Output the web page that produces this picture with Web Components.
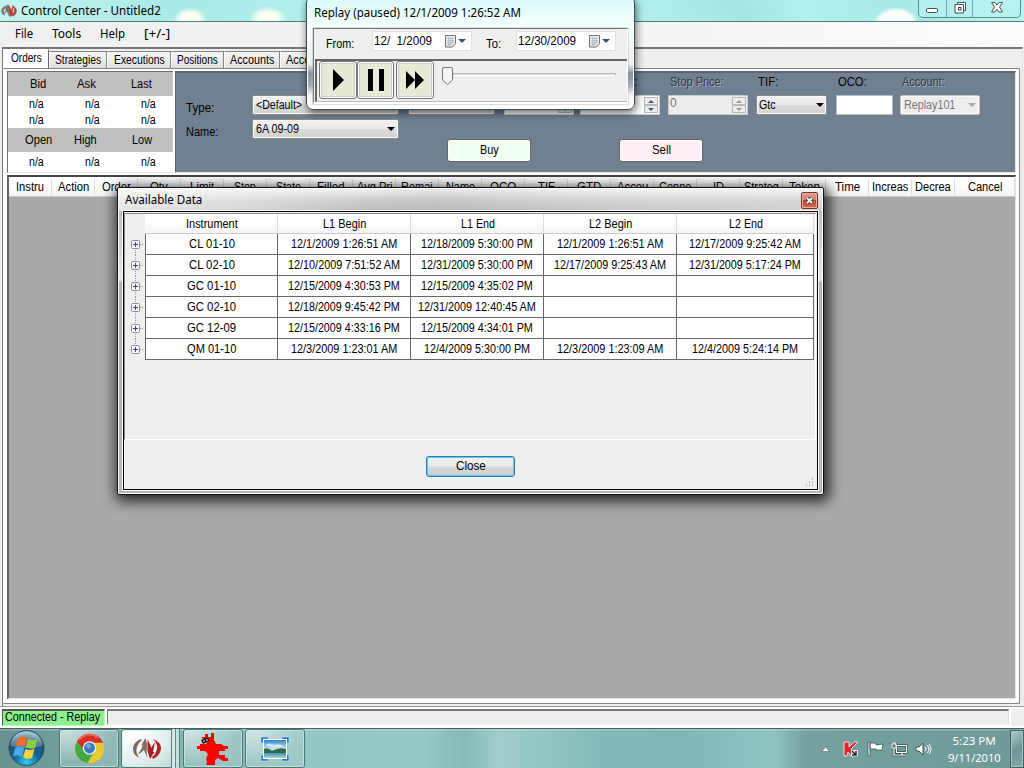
<!DOCTYPE html>
<html lang="en"><head><meta charset="utf-8"><title>Control Center - Untitled2</title>
<style>html,body{margin:0;width:1024px;height:768px;overflow:hidden}body{font:12px/13px "Liberation Sans",Arial,sans-serif;color:#000}</style></head>
<body><win-desktop></win-desktop>
<script>
const base = '*{box-sizing:border-box}:host{box-sizing:border-box}';
function define(name, css, html) {
  customElements.define(name, class extends HTMLElement {
    connectedCallback() {
      if (this.shadowRoot) return;
      const markup = typeof html === 'function' ? html(this) : html;
      this.attachShadow({mode: 'open'}).innerHTML = `<style>${base}${css}</style>${markup}`;
    }
  });
}
// A line of text condensed or expanded to a given width.
customElements.define('fit-text', class extends HTMLElement {
  connectedCallback() {
    if (this.shadowRoot) return;
    this.attachShadow({mode: 'open'}).innerHTML = '<style>:host{display:block;flex:none;white-space:nowrap}span{display:inline-block;transform-origin:0 50%;white-space:nowrap}</style><span><slot></slot></span>';
    const w = +this.getAttribute('w'), s = this.shadowRoot.querySelector('span');
    if (w) { const n = s.offsetWidth; this.style.width = w + 'px'; if (n) s.style.transform = `scaleX(${w / n})`; }
  }
});
const T = (t, w) => `<fit-text w="${w}">${t}</fit-text>`;

define('title-bar', `:host{display:flex;height:22px;border-bottom:1px solid #4f7f80;align-items:flex-start;
 background:radial-gradient(ellipse 17px 13px at 190px 20px,#fbfff0 55%,#fbfff000),radial-gradient(ellipse 19px 13px at 268px 19px,#fdfff2 50%,#fdfff200),radial-gradient(ellipse 22px 14px at 896px 21px,#fff 70%,#fff0),linear-gradient(60deg,#c4f3f0 0,#aaeae7 18%,#b4f2ee 35%,#b0eeeb 65%,#a5e6e3 72%,#b2f1ed 78%,#a8eae7 88%,#b9f5f2 100%)}
 svg.logo{margin:3px 4px 0 1px}.t{font:12px/16px "Noto Sans",sans-serif;margin-top:3px}
 .ctl{margin-left:auto;margin-right:3px;display:flex;width:103px;height:18px;border:1px solid #5b8d8d;border-top:0;border-radius:0 0 5px 5px;background:#b9f2ef99}
 .ctl i{display:flex;align-items:center;justify-content:center;border-right:1px solid #79aaaa;padding-bottom:2px}.ctl i:last-child{border:0}`,
 `<svg class="logo" width="16" height="16" viewBox="0 0 30 26"><path d="M8 3Q1 7 1 13Q1 19 7 21Q3 15 5 11Q6 7 9 5zM6 18Q10 12 10 8L7 9L13 1L17 9L14 8Q14 16 15 22Q13 17 11 13Q9 16 6 18z" fill="#77716e" stroke="#77716e"/><path d="M22 23Q29 19 29 13Q29 6 21 3Q26 8 25 14Q24 18 21 20zM15 3Q18 8 19 12Q20 9 23 5L21 18L24 17L17 24L15 14z" fill="#b53a3a" stroke="#b53a3a"/></svg>
 <div class="t">${T('Control Center - Untitled2',140)}</div>
 <div class="ctl"><i style="width:28px"><svg width="14" height="16"><rect x="1.5" y="8.5" width="11" height="4" rx="1" fill="#fff" stroke="#454f5c"/></svg></i><i style="width:27px"><svg width="14" height="14"><path d="M4.500 1.500h8v8h-2v2.500h-8.500v-8.500h2.500z" fill="#fff" stroke="#454f5c"/><rect x="5.500" y="6.500" width="2.500" height="2.500" fill="#cff" stroke="#454f5c"/><path d="M4.500 3.500h6v6" fill="none" stroke="#454f5c"/></svg></i><i style="width:47px"><svg width="14" height="13" viewBox="0 0 14 13"><path d="M1.500 1.500h3.500l2 2.500l2-2.500h3.500l-3 4.500l3 5h-3.500l-2-2.700l-2 2.700h-3.500l3-5z" fill="#fff" stroke="#454f5c"/></svg></i></div>`);

define('menu-bar', `:host{display:flex;height:25px;padding:4px 0 0 15px;background:linear-gradient(90deg,#f0f0f0,#f3f3f3 55%,#fcfcfc);font:12px/16px "Noto Sans",sans-serif;gap:19px}`,
 `${T('File',18)}${T('Tools',29)}${T('Help',25)}${T('[+/-]',26)}`);

define('tab-bar', `:host{display:flex;height:20px;background:#efefef;align-items:flex-end;margin-left:0}
 div{height:18px;background:linear-gradient(#f4f4f4,#ededed 45%,#dcdcdc);border:1px solid #858585;border-bottom:0;border-left-color:#fff;display:flex;justify-content:center;padding-top:2px;flex:none}
 .on{height:20px;background:#fff;padding-top:2px;border-color:#fff #666 #fff #fff}`,
 [['Orders',31,46],['Strategies',46,58],['Executions',51,64],['Positions',41,53],['Accounts',44,56],['Account Performance',105,116]].map((a,i)=>`<div class="${i?'':'on'}" style="width:${a[2]}px">${T(a[0],a[1])}</div>`).join(''));

define('quote-panel', `:host{display:block;width:166px;height:102px;border:1px solid #707070;border-right:0;border-bottom-color:#e5e5e5;background:#fff;flex:none}
 .r{display:grid;grid-template-columns:60px 37px 65px;justify-items:center;align-items:center;height:16px}.h{background:#c0c0c0;height:24px;border-right:1px solid #ccc}.o{height:24px}.r:not(.h){grid-template-columns:57px 54px 58px;padding-top:1px}`,
 (()=>{const n=`<div class="r">${T('n/a',15).repeat(3)}</div>`;
 return `<div class="r h">${T('Bid',16)}${T('Ask',19)}<span style="margin-left:8px">${T('Last',21)}</span></div>${n}${n}<div class="r h o">${T('Open',27)}<span style="margin-left:-3px">${T('High',23)}</span><span style="margin-left:8px">${T('Low',20)}</span></div><div class="r" style="height:20px">${T('n/a',15).repeat(3)}</div>`})());

define('combo-box', `:host{display:flex;height:20px;align-items:center;justify-content:space-between;padding:0 3px 0 3px;border:1px solid #8a8a8a;border-radius:2px;background:linear-gradient(#f3f3f3,#e9e9e9 49%,#dcdcdc 51%,#d0d0d0);box-shadow:inset 0 0 0 1px #fafafa}
 i{border:4px solid transparent;border-top-color:#000;border-bottom:0}:host([disabled]){background:#eee;color:#777;border-color:#c6c6c6}:host([disabled]) i{border-top-color:#aaa}`, '<slot></slot><i></i>');
define('spin-box', `:host{display:flex;height:20px;justify-content:space-between;background:#fff;border:1px solid #c5cbd0;padding:1px}
 b{font-weight:400}.s{display:flex;flex-direction:column;width:14px}.s i{height:8px;border:1px solid #b7b7b7;background:#eee;display:flex;align-items:center;justify-content:center}
 .s i:before{content:"";border:3px solid transparent;border-bottom-color:#3c559b;border-top:0}.s i:last-child:before{border:3px solid transparent;border-top-color:#3c559b;border-bottom:0}
 :host([disabled]){background:#ececec;color:#777}:host([disabled]) .s i:before{border-bottom-color:#999}:host([disabled]) .s i:last-child:before{border-top-color:#999}`,
 '<b><slot></slot></b><div class="s"><i></i><i></i></div>');
define('form-field', `:host{display:flex;flex-direction:column;gap:6px;flex:none}.l{height:13px;padding-left:2px}:host([dim]) .l{color:#303a43;text-shadow:1px 1px 0 #a9b2bb}`, '<div class="l"><slot name="label"></slot></div><slot></slot>');
define('push-button', `:host{display:flex;width:84px;height:23px;border:1px solid #666;border-radius:3px;align-items:center;justify-content:center;box-shadow:inset 0 0 0 1px #fff;padding-bottom:1px}`, '<slot></slot>');

define('order-form', `:host{display:flex;flex:1;height:102px;background:#708090;border:1px solid #5c6670;border-width:2px 1px 1px 1px;border-color:#5c6670 #e5e5e5 #e5e5e5 #5c6670}
 .a{width:76px;padding:29px 0 0 10px;display:flex;flex-direction:column;gap:11px;flex:none}.b{width:147px;padding-top:22px;display:flex;flex-direction:column;gap:4px;margin-right:9px;flex:none}
 .c{padding-top:3px}.f{display:flex}.g{display:flex;gap:88px;padding:24px 0 0 39px}`,
 `<div class="a">${T('Type:',28)}${T('Name:',32)}</div>
 <div class="b"><combo-box>${T('&lt;Default&gt;',46)}</combo-box><combo-box>${T('6A 09-09',43)}</combo-box></div>
 <div class="c"><div class="f">
 <form-field style="width:87px;margin-right:9px"><span slot="label">&nbsp;</span><combo-box>${T('Limit',24)}</combo-box></form-field>
 <form-field style="width:70px;margin-right:6px"><span slot="label">&nbsp;</span><spin-box>1</spin-box></form-field>
 <form-field style="width:80px;margin-right:8px"><span slot="label">${T('Limit Price:',55)}</span><spin-box>0</spin-box></form-field>
 <form-field dim style="width:80px;margin-right:8px"><span slot="label">${T('Stop Price:',54)}</span><spin-box disabled>0</spin-box></form-field>
 <form-field style="width:71px;margin-right:9px"><span slot="label">${T('TIF:',20)}</span><combo-box style="padding:0 2px">${T('Gtc',17)}</combo-box></form-field>
 <form-field style="width:57px;margin-right:7px"><span slot="label">${T('OCO:',29)}</span><div style="height:20px;background:#fff;border:1px solid #b8bec5"></div></form-field>
 <form-field dim style="width:80px"><span slot="label">${T('Account:',43)}</span><combo-box disabled style="padding:0 3px">${T('Replay101',51)}</combo-box></form-field>
 </div><div class="g"><push-button style="background:#f0fff0">${T('Buy',19)}</push-button><push-button style="background:#fff0f5">${T('Sell',19)}</push-button></div></div>`);

define('orders-grid', `:host{display:block;flex:1;background:#a9a9a9;border:2px solid #666;border-top-color:#454545;border-right:1px solid #e3e3e3;border-bottom:1px solid #e3e3e3}
 div{display:grid;grid-template-columns:repeat(22,43px) 1fr;height:20px;background:linear-gradient(#fff,#fff 45%,#f3f3f4);border-bottom:1px solid #ccc;align-items:center;justify-items:center;padding-top:2px}
 i{font-style:normal;border-right:1px solid #dedede;width:100%;height:17px;display:flex;justify-content:center;align-items:center}`,
 '<div>'+[['Instru',28],['Action',31],['Order',29],['Qty',18],['Limit',24],['Stop',22],['State',25],['Filled',28],['Avg Pri',35],['Remai',32],['Name',29],['OCO',26],['TIF',17],['GTD',24],['Accou',31],['Conne',32],['ID',11],['Strateg',35],['Token',31],['Time',25],['Increas',36],['Decrea',36],['Cancel',34]].map(a=>`<i>${T(...a)}</i>`).join('')+'</div>');

define('status-bar', `:host{display:flex;height:22px;background:#fff;border-top:1px solid #999;padding:2px 0 2px 2px;gap:2px}
 .c{width:103px;height:17px;background:#90ee90;border:1px solid #555;border-width:2px 1px 1px 1px;border-right-color:#afa;border-bottom-color:#afa;padding:0 2px}.e{flex:1;background:#f0eded;border:solid #777;border-width:2px 1px 1px 1px;border-right-color:#ddd;border-bottom-color:#eee;height:16px}.z{width:13px;background:#f0eded}`,
 `<div class="c">${T('Connected - Replay',95)}</div><div class="e"></div><div class="z"></div>`);

// Calendar drop-down used by the replay controller.
define('date-field', `:host{display:flex;align-items:center;width:100px;height:20px;background:#fff;border:1px solid #dce2e8;padding:0 5px 0 1px;justify-content:space-between}.i{display:flex;align-items:center;gap:2px}.i i{border:4px solid transparent;border-top-color:#38506e;border-bottom:0}`,
 `<slot></slot><div class="i"><svg width="11" height="13"><path d="M.5 .5h10v8l-3 3.500h-7z" fill="#e9edf2" stroke="#77706c"/><path d="M2 3.500h7M2 5.500h7M2 7.500h7M2 9.500h5M3.500 2v9M5.500 2v9M7.500 2v7" stroke="#a5b3c3" stroke-width=".7"/></svg><i></i></div>`);

define('replay-window', `:host{position:absolute;left:306px;top:-4px;width:329px;height:114px;border:1px solid #3d4c51;border-radius:7px;box-shadow:inset 0 0 0 1px #fff,1px 3px 8px #0009;background:linear-gradient(#d9fbf9 0,#effefd 20%,#f6ffff 28%,#f3f3f3 48%,#eee 60%,#8592a0 68%,#a6b0bb 79%,#f6f6f6 88%,#fff 100%);padding:8px 6px 0;display:block}
 .t{font:12px/16px "Noto Sans",sans-serif;height:23px;padding-left:1px}
 .body{height:76px;background:#efefef;border:1px solid #777;border-right-color:#fff;border-bottom:2px solid #fff;outline:1px solid #8884;width:315px}
 .d{display:flex;height:30px;padding:2px 0 0 12px}.d>fit-text{margin-top:7px}
 .p{display:flex;margin-left:1px;height:43px;border:2px solid #666;border-width:2px 0 0 2px;padding:0 0 0 2px;border-bottom:1px solid #bbb}
 .p b{width:38px;height:38px;background:#e9e9da;border:1px solid #777;border-radius:3px;box-shadow:inset 0 0 0 1px #fff,inset 0 0 0 2px #ccc;display:flex;align-items:center;justify-content:center;margin-top:0}
 .s{display:flex;margin:6px 0 0 8px}.s hr{width:163px;height:3px;margin:6px 0;border:1px solid #bbb;border-bottom-color:#fff;background:#ddd}`,
 `<div class="t">${T('Replay (paused) 12/1/2009 1:26:52 AM',207)}</div><div class="body"><div class="d">${T('From:',28)}<date-field style="margin:0 14px 0 18px;white-space:pre">${T('12/&nbsp; 1/2009',58)}</date-field>${T('To:',15)}<date-field style="margin-left:15px">${T('12/30/2009',58)}</date-field></div>
 <div class="p"><b><svg width="14" height="24"><path d="M2 1L13 12L2 23z"/></svg></b><b style="width:37px;margin-right:2px"><svg width="18" height="22"><path d="M1 0h5v22H1zM12 0h5v22h-5z"/></svg></b><b><svg width="20" height="18"><path d="M1 0L10 9L1 18zM10 0L19 9L10 18z"/></svg></b><div class="s"><svg width="11" height="18"><path d="M2 .5h7q1.500 0 1.500 1.500v11l-5 4.500l-5-4.500v-11q0-1.500 1.500-1.500z" fill="#f5f5f5" stroke="#777"/></svg><hr></div></div></div>`);

const rows = [
 ['CL 01-10','12/1/2009 1:26:51 AM','12/18/2009 5:30:00 PM','12/1/2009 1:26:51 AM','12/17/2009 9:25:42 AM'],
 ['CL 02-10','12/10/2009 7:51:52 AM','12/31/2009 5:30:00 PM','12/17/2009 9:25:43 AM','12/31/2009 5:17:24 PM'],
 ['GC 01-10','12/15/2009 4:30:53 PM','12/15/2009 4:35:02 PM','',''],
 ['GC 02-10','12/18/2009 9:45:42 PM','12/31/2009 12:40:45 AM','',''],
 ['GC 12-09','12/15/2009 4:33:16 PM','12/15/2009 4:34:01 PM','',''],
 ['QM 01-10','12/3/2009 1:23:01 AM','12/4/2009 5:30:00 PM','12/3/2009 1:23:09 AM','12/4/2009 5:24:14 PM']];
define('data-table', `:host{display:block;height:227px;border:1px solid #8d8d8d;border-width:1px 0 1px 1px;border-bottom-color:#fff;background:#efefef;width:692px;border-right:1px solid #fff}
 .r{display:grid;grid-template-columns:20px 133px 133px 133px 133px 137px;height:21px;width:689px}
 .c{background:#fff;border-right:1px solid #666;border-bottom:1px solid #666;display:flex;align-items:center;justify-content:center;padding:0 1px 0 0}
 .f{border-left:1px solid #666;padding-left:1px}.x{display:flex;align-items:center;justify-content:flex-end;padding-right:1px}
 .h{height:20px}.h .c{border:0;border-right:1px solid #ddd;border-bottom:1px solid #ccc;background:linear-gradient(#fff 45%,#f3f4f6);padding:2px 0 0 1px}`,
 ()=>{const widths={19:106,20:106,21:112,22:118};
 const heads=[['Instrument',52],['L1 Begin',43],['L1 End',34],['L2 Begin',43],['L2 End',34]];
 return `<div class="r h"><div></div>${heads.map(a=>`<div class="c">${T(...a)}</div>`).join('')}</div>`+rows.map((r,j)=>`<div class="r"><div class="x"><svg width="14" height="21" fill="none"><path d="M5.500 ${j?0:10}V${j<5?21:10}M10 10.500h4" stroke="#999" stroke-dasharray="1 1"/><rect x="1.500" y="6.500" width="8" height="8" rx="1" fill="#fafafa" stroke="#8f8f8f"/><path d="M3 10.500h5M5.500 8v5" stroke="#2d4b87"/></svg></div>${r.map((v,i)=>`<div class="c ${i?'':'f'}">${v?T(v,i?widths[v.length]:(v[0]=='C'?46:49)):''}</div>`).join('')}</div>`).join('')});
define('data-dialog', `:host{display:block;position:absolute;left:117px;top:187px;width:707px;height:308px;border:1px solid #111;box-shadow:inset 0 0 0 1px #fff,2px 3px 14px 3px #000c;background:linear-gradient(90deg,#fff9 0,#fff5 20%,#fff0 35%,#8881 45%,#fff3 75%,#fff4 100%) 0 0/100% 23px no-repeat,linear-gradient(#f4f4f4 0,#ccc 4%,#bbb 8%,#e8e8e8 30%,#b0b0b0 31%,#b6b6b6);padding:1px 5px 0;border-radius:2px}
 .t{display:flex;height:22px;font:12px/16px "Noto Sans",sans-serif;padding:3px 0 0 2px;justify-content:space-between}
 .x{width:17px;height:17px;border:1px solid #733;box-shadow:inset 0 0 0 1px #e9ab9c;border-radius:2px;background:linear-gradient(#df9e8c,#cb7866 48%,#b6452c 50%,#d06b51);display:flex;align-items:center;justify-content:center}
 .b{background:#efefef;border:1px solid #000;height:279px;width:695px;position:relative;padding:1px 0 0 0;box-shadow:0 0 0 1px #fff}
 .k{width:89px;height:21px;margin:16px 0 0 302px;border:1px solid #2880ac;border-radius:3px;background:linear-gradient(#f2f2f2,#e9e9e9 48%,#d8d8d8 52%,#cecece);box-shadow:inset 0 0 0 1px #64c8ec;display:flex;align-items:center;justify-content:center;padding-bottom:1px}
 .g{position:absolute;right:2px;bottom:2px}`,
 `<div class="t">${T('Available Data',77)}<div class="x"><svg width="9" height="9"><path d="M2 2l5 5M7 2L2 7" stroke="#333" stroke-width="3.200"/><path d="M2 2l5 5M7 2L2 7" stroke="#fff" stroke-width="1.800"/></svg></div></div><div class="b"><data-table></data-table><div class="k">${T('Close',30)}</div><svg class="g" width="9" height="9" fill="#b5b5b5"><path d="M6 0h1v2H6zM3 3h1v2H3zM6 3h1v2H6zM0 6h1v2H0zM3 6h1v2H3zM6 6h1v2H6z"/></svg></div>`);

define('task-button', `:host{display:flex;width:60px;height:39px;border:1px solid #4b7775;border-radius:3px;box-shadow:inset 0 0 0 1px #d8f2ef99;align-items:center;justify-content:center;background:radial-gradient(ellipse at 10% 0,#e2f1efcc,#b5d4d166 65%,#a8cdca66);flex:none}:host([active]){background:radial-gradient(ellipse at 20% 10%,#fff,#e3efee 60%,#bcd8d6)}`, '<slot></slot>');
define('task-bar', `:host{display:flex;height:40px;border-top:1px solid #45605f;padding:0 0 0 6px;background:linear-gradient(#fff5 0,#fff0 2px),linear-gradient(90deg,#68918f 0,#719e9b 60px,#85b5b1 180px,#94c7c3 310px,#98c9c6 420px,#86bab7 465px,#a0ceca 500px,#83bab7 600px,#7fb7b4 680px,#8fc4c1 775px,#75a19f 805px,#6f9a98);align-items:flex-start;color:#fff}
 .st{margin:0 14px 0 2px;width:37px;height:38px;flex:none}.gap{width:9px;height:39px;border:solid #57817f;border-width:0 1px;background:#c2dedb;box-shadow:inset 3px 0 #d5e7e5,inset 4px 0 #628b88}
 .tray{margin-left:auto;display:flex;align-items:center;height:39px}.clock{font:11.500px/17px "Noto Sans",sans-serif;display:flex;flex-direction:column;align-items:center;width:54px;margin:1px 9px 0 15px}.show{width:14px;height:38px;border:1px solid #3d6261;box-shadow:inset 0 0 0 1px #a5c4c3;background:linear-gradient(150deg,#b0cbc9,#6d9593 50%,#85aaa8)}`,
 `<svg class="st" viewBox="0 0 37 38"><defs><radialGradient id="o" cx=".5" cy=".9" r=".85"><stop offset="0" stop-color="#32d1f0"/><stop offset=".4" stop-color="#13689f"/><stop offset=".75" stop-color="#24506f"/><stop offset="1" stop-color="#96bccb"/></radialGradient></defs><circle cx="18.500" cy="19" r="17.500" fill="url(#o)" stroke="#274b59"/><path d="M3 17a15.500 14 0 0 1 31 0q-14 4-31 0z" fill="#d4edf3" opacity=".3"/><g transform="translate(-2.200 -2.500) scale(1.120)"><path d="M11 10q4-2 8 0l-2 8q-4-2-8-.5z" fill="#f26a2d"/><path d="M20 11q4 2 8 .5l-2 8q-4 1-8-1z" fill="#8fcd3d"/><path d="M8.500 19q4-2 8 0l-2 8q-4-2-8-.5z" fill="#4aa8ed"/><path d="M17.500 20q4 2 8 0l-2 8q-4 2-8-.5z" fill="#ffd03c"/></g></svg>
 <task-button><svg width="31" height="31" viewBox="0 0 32 32"><circle cx="16" cy="16" r="15" fill="#eac831"/><path d="M16 16L3 9a15 15 0 0 0 11 22l7-12z" fill="#45a843"/><path d="M3 8.500A15 15 0 0 1 30 10H16l-5 8z" fill="#d72f28"/><path d="M5 7Q15-3 25 5" stroke="#f78579" fill="none" stroke-width="2" opacity=".6"/><circle cx="16" cy="15.500" r="7" fill="#e7eff2"/><circle cx="16" cy="15.500" r="5.600" fill="#3878bd"/><circle cx="15" cy="13.500" r="2.500" fill="#73a9dd"/></svg></task-button>
 <task-button active style="margin-left:2px;width:52px"><svg width="30" height="26" viewBox="0 0 30 26"><path d="M9 3Q1 6 1 13Q1 19 7 22Q3 15 5 11Q6 7 10 4z" fill="#84695d"/><path d="M6 18Q10 13 11 9L9 9.500L13.500 2L15 8Q14 16 15.500 22L12 14Q9 17 6 18z" fill="#84695d"/><path d="M21 23Q29 19 29 12Q29 6 21 3Q26 8 25 13Q24 18 20 21z" fill="#ad2028"/><path d="M15.500 3Q18 8 19.500 12Q20 10 23 6L21 16L22.500 16L18 23L15.500 15z" fill="#ad2028"/></svg></task-button><div class="gap" style="margin-left:-2px"></div>
 <task-button style="margin-left:3px"><svg width="34" height="32" viewBox="0 0 34 32"><path fill="#f00" d="M5 4h4V1h3v3h3V0h3v7l2 4h5l3 2h4v3h-3v2h-6v4h6v3h3v3h-5l-5-3-3 2v5l-4 1h-5l1-5-1-2 2-5-3-3H4v-2H1v-3h3v-2h6l1-2-5-4z"/><path d="M5 7l7-3 1 4-6 3z" fill="#111"/><path d="M7 8h2m1-1h2" stroke="#fff" stroke-width="1"/></svg></task-button>
 <task-button style="margin-left:2px"><svg width="30" height="26" viewBox="0 0 30 26"><defs><linearGradient id="sk" x2="0" y2="1"><stop stop-color="#2c83cc"/><stop offset=".5" stop-color="#cdecf6"/><stop offset=".7" stop-color="#3b8ba8"/><stop offset="1" stop-color="#a8d7df"/></linearGradient></defs><path d="M1 1h7v6H1zM22 1h7v6h-7zM1 19h7v6H1zM22 19h7v6h-7z" fill="#347cc0" stroke="#bcdff3" stroke-width=".5"/><rect x="3" y="3" width="24" height="20" fill="#fff"/><rect x="4" y="4" width="22" height="18" fill="url(#sk)"/><path d="M4 13q4-2 8 2q7-4 14-2v4H4z" fill="#316b4b"/><path d="M5 9q5-3 9 0q5-2 10 1q-9 3-19-1z" fill="#fff" opacity=".6"/></svg></task-button>
 <div class="tray"><svg width="9" height="6" style="margin-right:13px"><path d="M.5 5.500L4.500 1L8.500 5.500z" fill="#fff" stroke="#476d6a" stroke-width=".6"/></svg>
 <svg width="16" height="16" style="margin-right:8px"><path d="M1 1h5v5l5-5h4L8 8l6 7H8l-3-4-1 4H1z" fill="#e4252c" stroke="#fff" stroke-width=".8"/><path d="M8 9h7v6H8z" fill="#eee"/><path d="M9 10l4 4m0-4v4H9" stroke="#222" fill="none" stroke-width="1.500"/></svg>
 <svg width="17" height="16" style="margin-right:7px"><path d="M1 1h2v14H1zM3 2h6v2l7-1-1 6H9V8H3z" fill="#fff" stroke="#3e5555" stroke-width=".8"/></svg>
 <svg width="17" height="16" style="margin-right:7px" fill="none"><path d="M5.500 4.500h10v7h-10zM8 14h6M11 12v2M1 3h4v4H1zM3 7v7h3M2 1v2M4 1v2" stroke="#334c4b" stroke-width="2.500"/><path d="M5.500 4.500h10v7h-10zM8 14h6M11 12v2M1 3h4v4H1zM3 7v7h3M2 1v2M4 1v2" stroke="#fff" stroke-width="1.200"/></svg>
 <svg width="17" height="16" fill="none"><path d="M1 6h3l4-4v12l-4-4H1z" fill="#fff" stroke="#455"/><path d="M10 6q2 2 0 4M12 4q4 4 0 8M14 3q4 5 0 10" stroke="#fff"/></svg>
 <div class="clock">${T('5:23 PM',43)}${T('9/11/2010',53)}</div><div class="show"></div></div>`);

define('win-desktop', `:host{display:flex;flex-direction:column;width:1024px;height:768px;position:relative;background:#efefef;overflow:hidden}
 .work{height:660px;margin:0 1px 0 2px;border:1px solid #777;border-top-width:2px;border-right-color:#e5e5e5;border-bottom-color:#e5e5e5;display:flex;flex-direction:column}
 .page{flex:1;display:flex;flex-direction:column;border:1px solid #858585;border-left-color:#fff;background:#fff;margin:-1px 2px 2px 0;padding:2px 3px 4px 3px}.top{display:flex;gap:2px;margin-bottom:2px}`,
 `<title-bar></title-bar><menu-bar></menu-bar><div class="work"><tab-bar></tab-bar><div class="page"><div class="top"><quote-panel></quote-panel><order-form></order-form></div><orders-grid></orders-grid></div></div><status-bar style="margin-top:-1px"></status-bar><task-bar></task-bar><replay-window></replay-window><data-dialog></data-dialog>`);
</script></body></html>
